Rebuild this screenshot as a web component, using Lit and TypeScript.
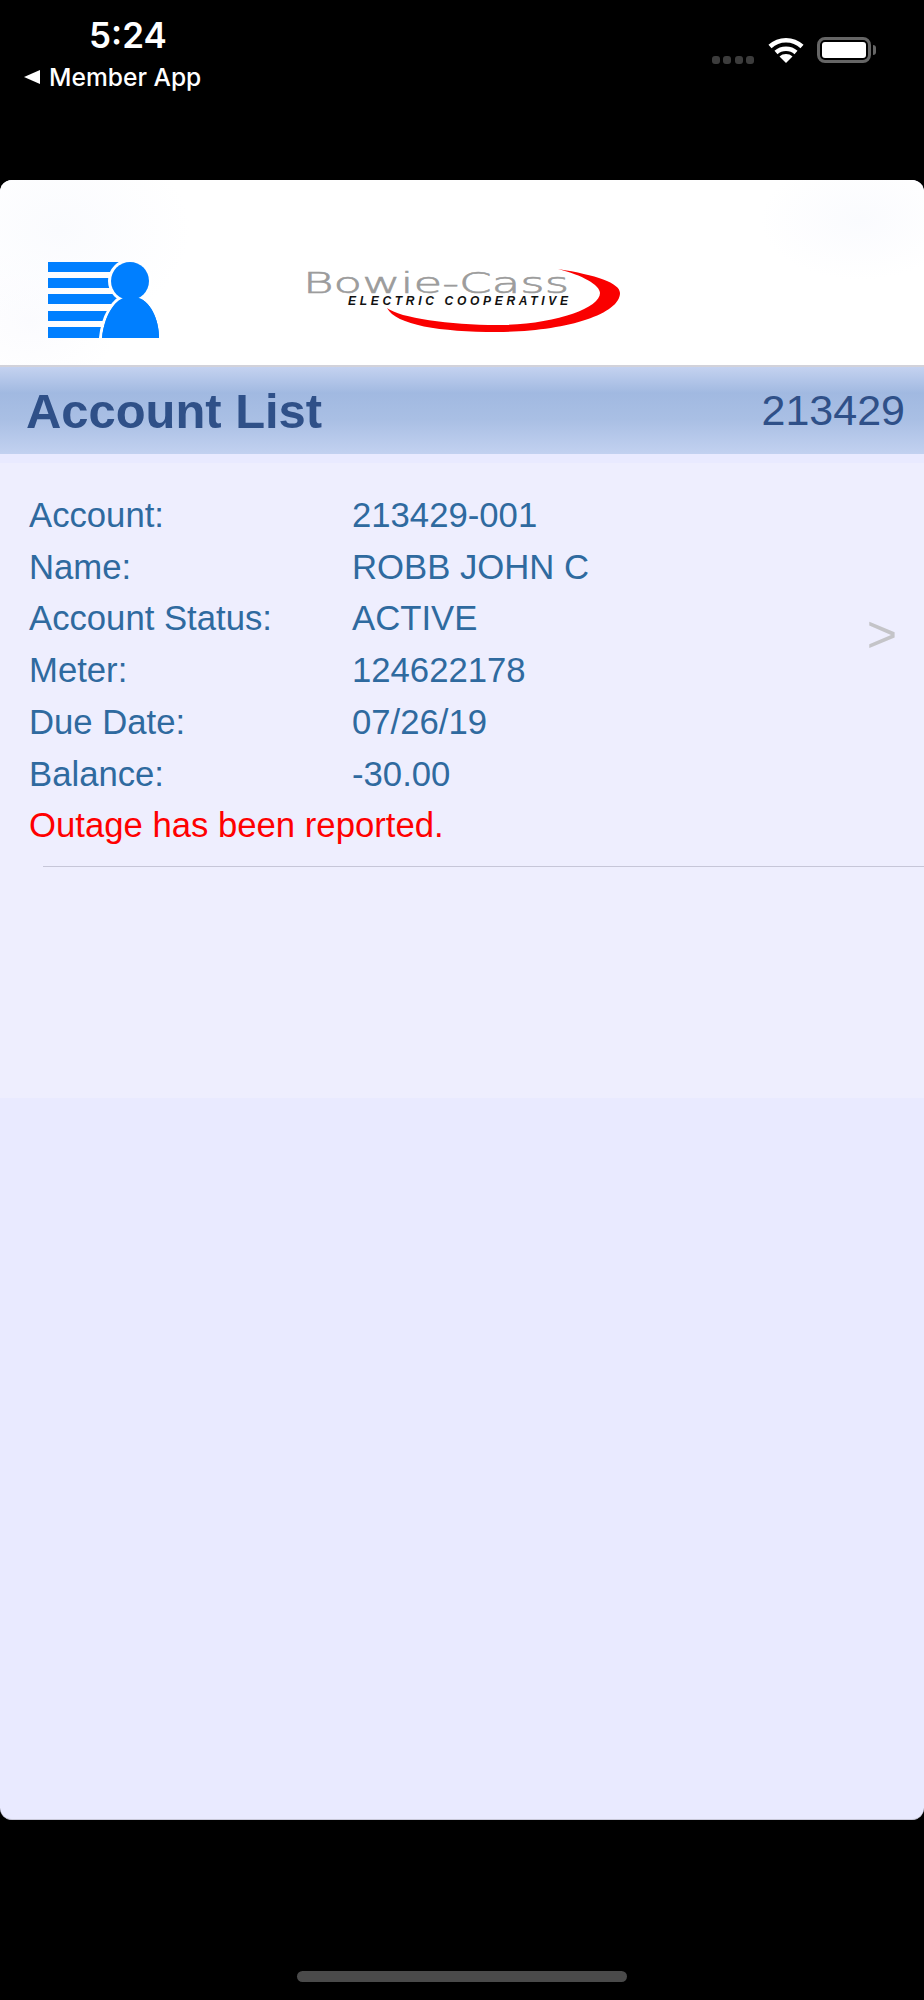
import {LitElement, html, css, svg} from 'lit';
import {customElement} from 'lit/decorators.js';

const ROWS = [
  ['Account:', '213429-001'],
  ['Name:', 'ROBB JOHN C'],
  ['Account Status:', 'ACTIVE'],
  ['Meter:', '124622178'],
  ['Due Date:', '07/26/19'],
  ['Balance:', '-30.00'],
];

const wifiIcon = svg`
  <svg class="wifi" width="36" height="26" viewBox="0 0 36 26">
    <path d="M2 9.500C11 1 25 1 34 9.500" fill="none" stroke="#fff" stroke-width="4.500"/>
    <path d="M8 15.500C13.500 10.500 22.500 10.500 28 15.500" fill="none" stroke="#fff" stroke-width="4.500"/>
    <path d="M18 26L11.500 19.500C15 16.200 21 16.200 24.500 19.500Z" fill="#fff"/>
  </svg>`;

const accountIcon = svg`
  <svg class="account-icon" width="111" height="76" viewBox="0 0 111 76">
    <g fill="#007fff">
      <rect x="0" y="0" width="92" height="10"/>
      <rect x="0" y="16" width="92" height="10"/>
      <rect x="0" y="32" width="92" height="10"/>
      <rect x="0" y="49" width="92" height="10"/>
      <rect x="0" y="65" width="92" height="11"/>
    </g>
    <g fill="#007fff" stroke="#fff" stroke-width="6" paint-order="stroke">
      <path d="M54 76C56 55 66 38 78 35L88 35C102 38 111 57 111 76V84H54Z"/>
      <ellipse cx="82" cy="19" rx="19" ry="19"/>
    </g>
    <path d="M54 76C56 55 66 38 78 35L88 35C102 38 111 57 111 76Z" fill="#007fff"/>
  </svg>`;

const logo = svg`
  <svg class="logo" width="324" height="72" viewBox="0 0 324 72">
    <path d="M258 4C296 10 320 18 320 28C320 50 262 67 197 67C140 67 96 60 87 43C100 53 150 60 197 60C252 60 300 44 300 28C300 20 282 10 258 4Z" fill="#fa0000"/>
    <text x="3" y="28" font-family="'DejaVu Sans', 'Liberation Sans', sans-serif" font-weight="200" font-size="29" fill="#9c9c9c" stroke="#9c9c9c" stroke-width="0.600" textLength="266" lengthAdjust="spacingAndGlyphs">Bowie-Cass</text>
    <text x="48" y="40" font-family="'Liberation Sans', sans-serif" font-weight="700" font-style="italic" font-size="12" fill="#111" textLength="220" lengthAdjust="spacing">ELECTRIC COOPERATIVE</text>
  </svg>`;

@customElement('app-root')
export class AppRoot extends LitElement {
  static styles = css`
    :host {
      display: block;
      width: 924px;
      height: 2000px;
      background: #000;
      font-family: 'Liberation Sans', Arial, sans-serif;
    }

    .status-bar {
      height: 180px;
      box-sizing: border-box;
      display: flex;
      justify-content: space-between;
      color: #fff;
      font-family: Inter, 'Liberation Sans', sans-serif;
    }

    .status-left {
      padding: 15px 0 0 24px;
    }

    .time {
      margin-left: 65px;
      font-size: 35px;
      line-height: 40px;
      font-weight: 600;
    }

    .back {
      display: flex;
      align-items: center;
      gap: 9px;
      margin-top: 6px;
      font-size: 24.600px;
      line-height: 32px;
      font-weight: 500;
    }

    .back-arrow {
      width: 0;
      height: 0;
      border-top: 7.500px solid transparent;
      border-bottom: 7.500px solid transparent;
      border-right: 16px solid #fff;
    }

    .status-right {
      display: flex;
      align-items: flex-end;
      height: 26px;
      padding: 37px 53px 0 0;
    }

    .signal {
      display: flex;
      gap: 3.500px;
      margin: 0 14px -1px 0;
    }

    .signal i {
      width: 8px;
      height: 8px;
      border-radius: 3px;
      background: #3c3c3c;
    }

    .battery {
      position: relative;
      box-sizing: border-box;
      width: 54px;
      height: 26px;
      margin-left: 13px;
      padding: 2px;
      border: 3px solid #666;
      border-radius: 8px;
    }

    .battery div {
      height: 100%;
      border-radius: 3px;
      background: #fff;
    }

    .battery::after {
      content: '';
      position: absolute;
      top: 5px;
      right: -8px;
      width: 3px;
      height: 10px;
      border-radius: 0 3px 3px 0;
      background: #666;
    }

    .card {
      height: 1640px;
      border-radius: 12px;
      overflow: hidden;
      background: #e9eaff;
      border-bottom: 1px solid #c8c8d8;
      box-sizing: border-box;
    }

    .brand {
      box-sizing: border-box;
      height: 187px;
      padding: 82px 0 0 48px;
      display: flex;
      align-items: flex-start;
      background:
        radial-gradient(ellipse 130px 100px at 60px 50px, #fafbfe, transparent),
        radial-gradient(ellipse 90px 70px at 30px 140px, #fbfbfe, transparent),
        radial-gradient(ellipse 100px 60px at 860px 40px, #fafbfe, transparent),
        #fff;
      border-bottom: 2px solid #d2d2da;
    }

    .logo {
      margin: 3px 0 0 141px;
    }

    .title-bar {
      height: 87px;
      box-sizing: border-box;
      display: flex;
      align-items: center;
      justify-content: space-between;
      padding: 1px 19px 0 26px;
      background: linear-gradient(#c4d2f0 0%, #a1b9e1 30%, #a9bfe4 60%, #c2d1f0 100%);
      color: #2f5088;
    }

    .title {
      font-size: 48.900px;
      font-weight: 700;
    }

    .number {
      margin-bottom: 2px;
      font-size: 43px;
    }

    .accounts {
      margin-top: 9px;
      height: 635px;
      box-sizing: border-box;
      padding-top: 27px;
      background: #eeeefe;
    }

    .account {
      display: flex;
      align-items: flex-start;
      justify-content: space-between;
      padding: 0 27px 0 29px;
      font-size: 34.700px;
      line-height: 51.700px;
      color: #2f6a9f;
    }

    .row {
      display: grid;
      grid-template-columns: 323px auto;
    }

    .outage {
      color: #ff0000;
    }

    .chevron {
      margin-top: 118px;
      font-size: 52px;
      line-height: 52px;
      color: #c4c4c8;
    }

    .divider {
      height: 1px;
      margin: 14px 0 0 43px;
      background: #c6c6d8;
    }

    .home-area {
      height: 180px;
      box-sizing: border-box;
      padding-top: 151px;
    }

    .home-bar {
      width: 330px;
      height: 11px;
      margin-left: 297px;
      border-radius: 6px;
      background: #4a4a4a;
    }
  `;

  render() {
    return html`
      <div class="status-bar">
        <div class="status-left">
          <div class="time">5:24</div>
          <div class="back"><span class="back-arrow"></span>Member App</div>
        </div>
        <div class="status-right">
          <div class="signal"><i></i><i></i><i></i><i></i></div>
          ${wifiIcon}
          <div class="battery"><div></div></div>
        </div>
      </div>
      <div class="card">
        <div class="brand">${accountIcon}${logo}</div>
        <div class="title-bar">
          <span class="title">Account List</span>
          <span class="number">213429</span>
        </div>
        <div class="accounts">
          <div class="account">
            <div>
              ${ROWS.map(
                ([label, value]) => html`
                  <div class="row"><span>${label}</span><span>${value}</span></div>
                `
              )}
              <div class="outage">Outage has been reported.</div>
            </div>
            <span class="chevron">&gt;</span>
          </div>
          <div class="divider"></div>
        </div>
      </div>
      <div class="home-area"><div class="home-bar"></div></div>
    `;
  }
}
